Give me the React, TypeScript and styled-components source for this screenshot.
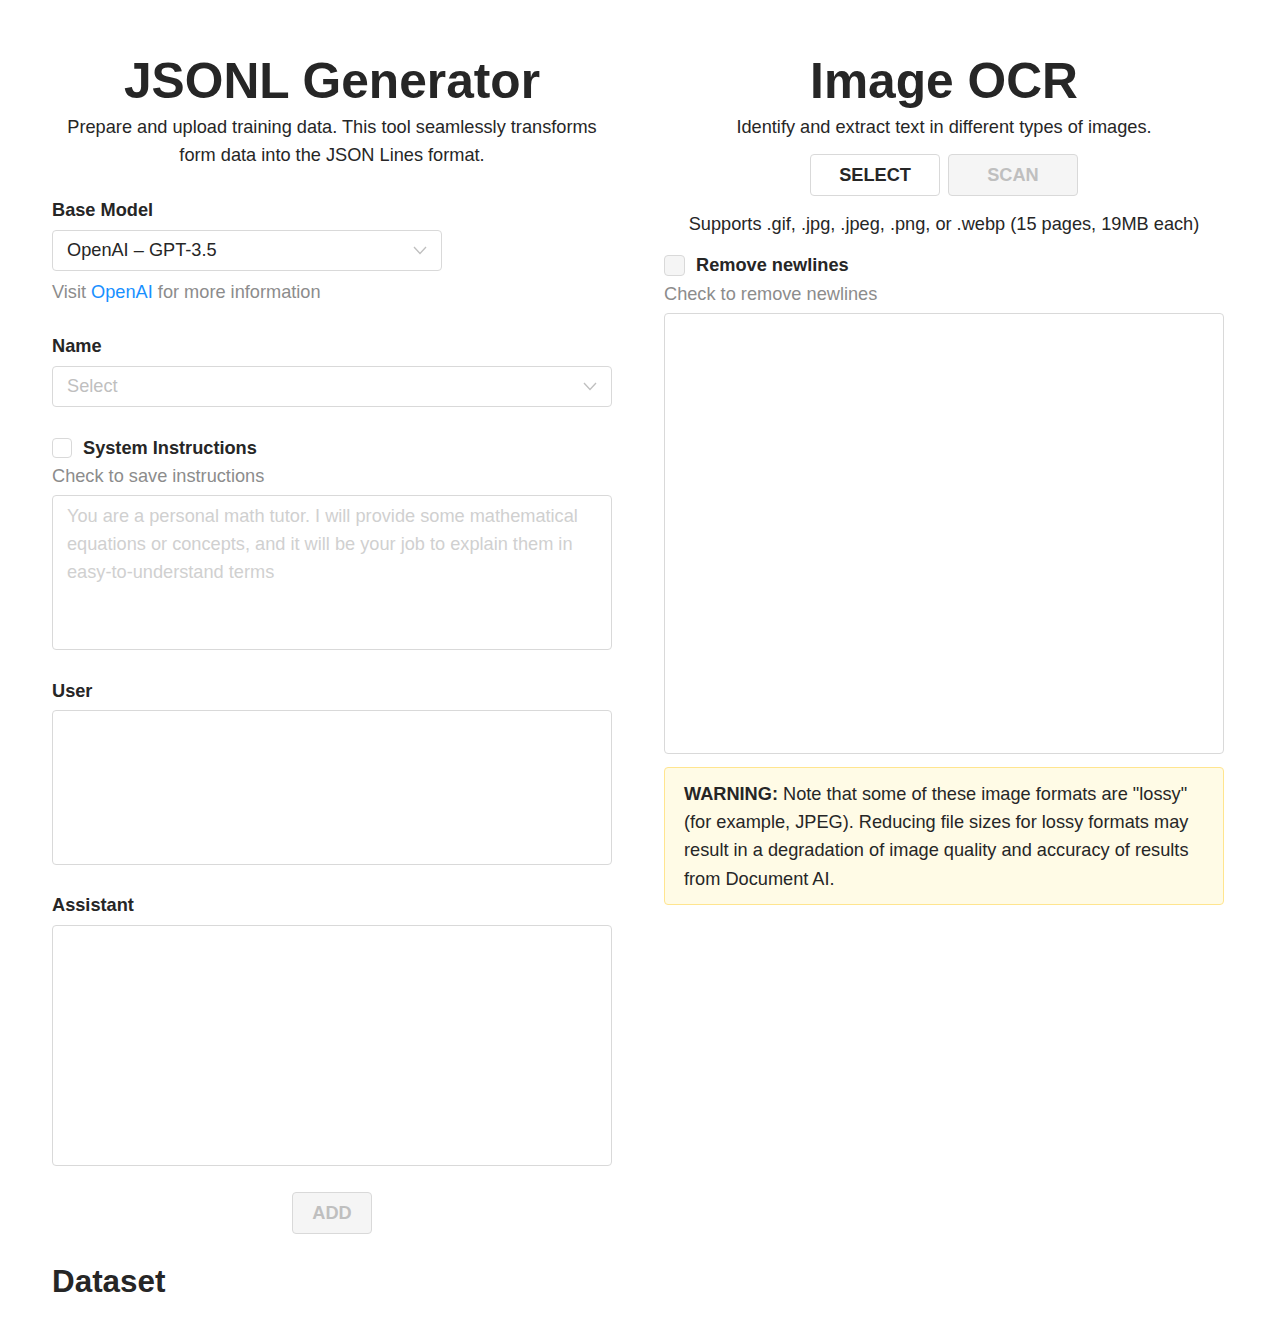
import React from "react";
import styled, { createGlobalStyle } from "styled-components";

const GlobalStyle = createGlobalStyle`
  body {
    margin: 0;
    background: #fff;
    color: #262626;
    font-family: "Liberation Sans", Arial, sans-serif;
  }
  * { box-sizing: border-box; }
`;

const Page = styled.main`
  display: grid;
  grid-template-columns: 560px 560px;
  gap: 52px;
  padding: 52px 52px 20px;
  align-items: start;
`;

const Column = styled.section`
  display: flex;
  flex-direction: column;
`;

const Title = styled.h1`
  margin: 0 0 3px;
  font-size: 49.7px;
  line-height: 58px;
  font-weight: 700;
  text-align: center;
  color: #262626;
`;

const Intro = styled.p`
  margin: 0;
  font-size: 18.2px;
  line-height: 28.3px;
  text-align: center;
  color: #262626;
`;

const Field = styled.div<{ $top?: number }>`
  display: flex;
  flex-direction: column;
  margin-top: ${(p) => p.$top ?? 26}px;
`;

const Label = styled.label<{ $gap?: number }>`
  font-size: 18.2px;
  line-height: 28.3px;
  font-weight: 700;
  margin-bottom: ${(p) => p.$gap ?? 6}px;
`;

const SelectBox = styled.div<{ $width?: string; $placeholder?: boolean }>`
  display: flex;
  align-items: center;
  justify-content: space-between;
  width: ${(p) => p.$width ?? "100%"};
  height: 41px;
  padding: 0 14px;
  border: 1px solid #d9d9d9;
  border-radius: 4px;
  font-size: 18.2px;
  color: ${(p) => (p.$placeholder ? "#bfbfbf" : "#262626")};
`;

const Help = styled.div<{ $top?: number }>`
  margin-top: ${(p) => p.$top ?? 0}px;
  font-size: 18.2px;
  line-height: 28.3px;
  color: #8c8c8c;

  a {
    color: #1890ff;
    text-decoration: none;
  }
`;

const TextArea = styled.textarea<{ $height: number; $top?: number }>`
  display: block;
  width: 100%;
  height: ${(p) => p.$height}px;
  margin-top: ${(p) => p.$top ?? 4}px;
  padding: 6px 14px;
  border: 1px solid #d9d9d9;
  border-radius: 4px;
  resize: none;
  font-family: inherit;
  font-size: 18.2px;
  line-height: 28.3px;
  color: #262626;

  &::placeholder {
    color: #d0d0d0;
  }
`;

const CheckRow = styled.div`
  display: flex;
  align-items: center;
  gap: 11px;
  height: 29px;
  font-size: 18.2px;
  line-height: 28.3px;
  font-weight: 700;
`;

const Box = styled.span<{ $disabled?: boolean }>`
  width: ${(p) => (p.$disabled ? 21 : 20)}px;
  height: ${(p) => (p.$disabled ? 21 : 20)}px;
  border: 1px solid #d9d9d9;
  border-radius: 4px;
  background: ${(p) => (p.$disabled ? "#f5f5f5" : "#fff")};
`;

const ButtonRow = styled.div<{ $top: number }>`
  display: flex;
  justify-content: center;
  gap: 8px;
  margin-top: ${(p) => p.$top}px;
`;

const Button = styled.button<{ $width: number; $disabled?: boolean }>`
  width: ${(p) => p.$width}px;
  height: 42px;
  border: 1px solid #d9d9d9;
  border-radius: 4px;
  background: ${(p) => (p.$disabled ? "#f5f5f5" : "#fff")};
  color: ${(p) => (p.$disabled ? "#bfbfbf" : "#262626")};
  font-family: inherit;
  font-size: 18.2px;
  font-weight: 700;
  cursor: ${(p) => (p.$disabled ? "not-allowed" : "pointer")};
`;

const Subheading = styled.h2`
  margin: 30px 0 0;
  font-size: 31.4px;
  line-height: 36px;
  font-weight: 700;
`;

const Supports = styled.p`
  margin: 14px 0 0;
  font-size: 18.2px;
  line-height: 28.3px;
  text-align: center;
`;

const Warning = styled.div`
  margin-top: 13px;
  padding: 12px 19px 11px;
  border: 1px solid #ffe58f;
  border-radius: 4px;
  background: #fffbe6;
  font-size: 18.2px;
  line-height: 28.3px;
  color: #262626;
`;

const Chevron = () => (
  <svg width="14" height="9" viewBox="0 0 14 9" fill="none">
    <polyline points="1,1 7,7.5 13,1" stroke="#bfbfbf" strokeWidth="1.3" />
  </svg>
);

const App = () => {
  return (
    <>
      <GlobalStyle />
      <Page>
        <Column>
          <Title>JSONL Generator</Title>
          <Intro>
            Prepare and upload training data. This tool seamlessly transforms
            <br />
            form data into the JSON Lines format.
          </Intro>

          <Field $top={26}>
            <Label>Base Model</Label>
            <SelectBox $width="390px">
              <span>OpenAI – GPT-3.5</span>
              <Chevron />
            </SelectBox>
            <Help $top={7}>
              Visit <a href="#">OpenAI</a> for more information
            </Help>
          </Field>

          <Field>
            <Label>Name</Label>
            <SelectBox $placeholder>
              <span>Select</span>
              <Chevron />
            </SelectBox>
          </Field>

          <Field $top={26}>
            <CheckRow>
              <Box />
              System Instructions
            </CheckRow>
            <Help>Check to save instructions</Help>
            <TextArea
              $height={155}
              placeholder="You are a personal math tutor. I will provide some mathematical equations or concepts, and it will be your job to explain them in easy-to-understand terms"
            />
          </Field>

          <Field $top={27}>
            <Label $gap={5}>User</Label>
            <TextArea $height={155} $top={0} />
          </Field>

          <Field $top={26}>
            <Label>Assistant</Label>
            <TextArea $height={241} $top={0} />
          </Field>

          <ButtonRow $top={26}>
            <Button $width={80} $disabled>
              ADD
            </Button>
          </ButtonRow>

          <Subheading>Dataset</Subheading>
        </Column>

        <Column>
          <Title>Image OCR</Title>
          <Intro>Identify and extract text in different types of images.</Intro>
          <ButtonRow $top={13}>
            <Button $width={130}>SELECT</Button>
            <Button $width={130} $disabled>
              SCAN
            </Button>
          </ButtonRow>
          <Supports>
            Supports .gif, .jpg, .jpeg, .png, or .webp (15 pages, 19MB each)
          </Supports>

          <Field $top={12}>
            <CheckRow>
              <Box $disabled />
              Remove newlines
            </CheckRow>
            <Help>Check to remove newlines</Help>
            <TextArea $height={441} $top={5} />
          </Field>

          <Warning>
            <b>WARNING:</b> Note that some of these image formats are "lossy"
            (for example, JPEG). Reducing file sizes for lossy formats may
            result in a degradation of image quality and accuracy of results
            from Document AI.
          </Warning>
        </Column>
      </Page>
    </>
  );
};

export default App;
